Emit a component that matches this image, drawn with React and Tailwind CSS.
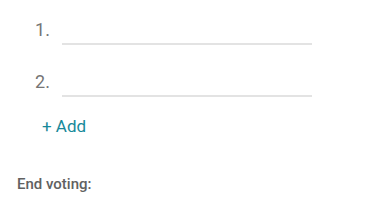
export default function App() {
  const options = [1, 2];

  return (
    <div className="w-[384px] h-[216px] bg-white overflow-hidden font-['Roboto',sans-serif]">
      <div className="pl-[35px] pt-[19px]">
        {options.map((n) => (
          <div key={n} className="flex items-end h-[26px] mb-[26px]">
            <span className="w-[27px] text-[18px] leading-[20px] text-[#757575] mb-[5px]">{n}.</span>
            <div className="w-[250px] border-b-2 border-[#e3e3e3]" />
          </div>
        ))}
      </div>
      <div className="pl-[42px] -mt-[8px]">
        <button className="text-[17px] leading-[20px] text-[#17899a]">+ Add</button>
      </div>
      <div className="pl-[17px] mt-[33px]">
        <span className="text-[15px] font-medium text-[#616161]">End voting:</span>
      </div>
    </div>
  );
}
